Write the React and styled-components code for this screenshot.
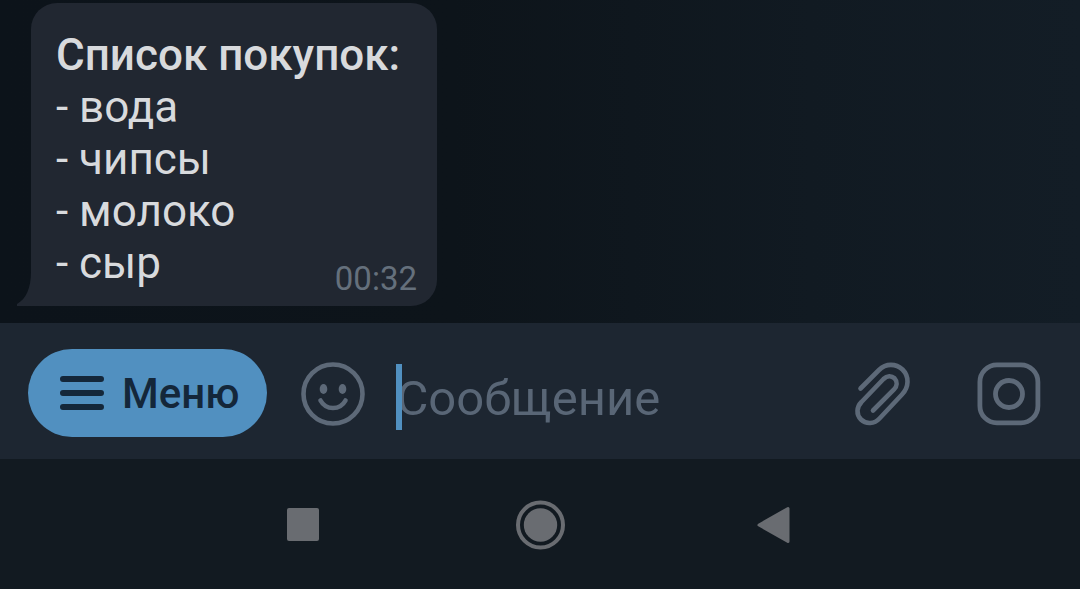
import React from "react";
import styled, { createGlobalStyle } from "styled-components";

const GlobalStyle = createGlobalStyle`
  * {
    box-sizing: border-box;
  }
  body {
    margin: 0;
    background: #121a21;
    font-family: Roboto, "Noto Sans", sans-serif;
  }
`;

const Screen = styled.div`
  display: flex;
  flex-direction: column;
  min-height: 100vh;
`;

const Chat = styled.main`
  display: flex;
  flex: 1;
  align-items: flex-end;
  padding: 3px 16px 17px 31px;
  background: linear-gradient(90deg, #0c131a 0%, #0d141a 42%, #111a22 75%, #131d26 100%);
`;

const Bubble = styled.article`
  position: relative;
  display: flex;
  align-items: flex-end;
  min-width: 406px;
  padding: 26px 20px 7px 25px;
  border-radius: 26px 26px 26px 0;
  background: #212731;
`;

const Tail = styled.svg`
  position: absolute;
  left: -15px;
  bottom: 0;
  width: 16px;
  height: 34px;
  fill: #212731;
`;

const MessageText = styled.div`
  flex: 1;
  padding-bottom: 10px;
  color: #d8dadd;
  font-size: 44px;
  line-height: 52px;
  white-space: nowrap;
`;

const Title = styled.h1`
  margin: 0;
  font-size: 44px;
  font-weight: 500;
  line-height: 52px;
`;

const List = styled.ul`
  margin: 0;
  padding: 0;
  list-style: none;
`;

const Time = styled.time`
  width: 84px;
  margin-left: -84px;
  color: #65707c;
  font-size: 33px;
  line-height: 40px;
  text-align: right;
`;

const Composer = styled.form`
  display: flex;
  align-items: center;
  height: 136px;
  padding: 0 37px 0 28px;
  background: #1d2631;
`;

const MenuButton = styled.button`
  display: flex;
  align-items: center;
  gap: 17px;
  height: 88px;
  margin: 4px 32px 0 0;
  padding: 0 28px 0 31px;
  border: 0;
  border-radius: 44px;
  background: #5190c0;
  color: #14273a;
  font-family: inherit;
  font-size: 42px;
  font-weight: 500;
`;

const IconButton = styled.button`
  display: flex;
  flex: none;
  padding: 0;
  border: 0;
  background: none;
  color: ${({ $color }) => $color || "#5d6978"};
`;

const ComposerButton = styled(IconButton)`
  margin-top: 6px;
`;

const Field = styled.label`
  position: relative;
  flex: 1;
  min-width: 0;
  margin: 14px 24px 0 29px;
`;

const Caret = styled.span`
  position: absolute;
  top: -2px;
  left: 0;
  width: 6px;
  height: 66px;
  background: #5190c0;
`;

const Input = styled.input`
  display: block;
  width: 100%;
  height: 64px;
  padding: 0;
  border: 0;
  outline: 0;
  background: none;
  color: #d8dadd;
  font-family: inherit;
  font-size: 49px;

  &::placeholder {
    color: #596676;
    opacity: 1;
  }
`;

const Actions = styled.div`
  display: flex;
  gap: 63px;
`;

const NavBar = styled.nav`
  display: flex;
  justify-content: center;
  align-items: center;
  gap: 172px;
  height: 130px;
  background: #121a21;
`;

const items = ["вода", "чипсы", "молоко", "сыр"];

function MenuIcon() {
  return (
    <svg width="46" height="36" viewBox="0 0 46 36" stroke="currentColor" strokeWidth="6" strokeLinecap="round">
      <path d="M4 4h38M4 18h38M4 32h38" />
    </svg>
  );
}

function SmileIcon() {
  return (
    <svg width="68" height="68" viewBox="0 0 68 68" fill="none" stroke="currentColor" strokeWidth="4.6">
      <circle cx="34" cy="34" r="29.5" />
      <ellipse cx="24.5" cy="29" rx="3.8" ry="5" fill="currentColor" stroke="none" />
      <ellipse cx="43.5" cy="29" rx="3.8" ry="5" fill="currentColor" stroke="none" />
      <path d="M21.500 40.500c5.500 10 19.500 10 25 0" strokeLinecap="round" />
    </svg>
  );
}

function ClipIcon() {
  return (
    <svg width="60" height="68" viewBox="0 0 60 68" fill="none" stroke="currentColor" strokeWidth="4.6" strokeLinecap="round">
      <path d="M8.500 28.500L27 10C34 3 44 3.500 50.500 9.500C57.500 16.500 57 27 50 34.500L27.500 58.500C22.500 64 14 64.500 9 59.500C4 54.500 4.500 47 9.500 42L31.500 19C35 15.500 39.500 15.500 42.500 18.300C45.500 21.500 45.300 26 42 29.500L21 50.500" />
    </svg>
  );
}

function CameraIcon() {
  return (
    <svg width="68" height="68" viewBox="0 0 68 68" fill="none" stroke="currentColor" strokeWidth="4.8">
      <rect x="4.900" y="4.900" width="58" height="58" rx="17" />
      <circle cx="34" cy="34" r="13.500" />
    </svg>
  );
}

export default function App() {
  return (
    <Screen>
      <GlobalStyle />
      <Chat>
        <Bubble>
          <Tail viewBox="0 0 16 34">
            <path d="M15 0C15 16 10 27 1 32V34H16V0Z" />
          </Tail>
          <MessageText>
            <Title>Список покупок:</Title>
            <List>
              {items.map((item) => (
                <li key={item}>- {item}</li>
              ))}
            </List>
          </MessageText>
          <Time>00:32</Time>
        </Bubble>
      </Chat>
      <Composer onSubmit={(e) => e.preventDefault()}>
        <MenuButton type="button">
          <MenuIcon />
          Меню
        </MenuButton>
        <ComposerButton type="button" aria-label="Эмодзи">
          <SmileIcon />
        </ComposerButton>
        <Field>
          <Input type="text" placeholder="Сообщение" aria-label="Сообщение" />
          <Caret />
        </Field>
        <Actions>
          <ComposerButton type="button" aria-label="Прикрепить">
            <ClipIcon />
          </ComposerButton>
          <ComposerButton type="button" aria-label="Камера">
            <CameraIcon />
          </ComposerButton>
        </Actions>
      </Composer>
      <NavBar>
        <IconButton type="button" aria-label="Недавние" $color="#696c71">
          <svg width="64" height="64" viewBox="0 0 64 64" fill="currentColor">
            <rect x="15" y="16" width="32" height="33" rx="2" />
          </svg>
        </IconButton>
        <IconButton type="button" aria-label="Домой" $color="#696c71">
          <svg width="64" height="64" viewBox="0 0 64 64" fill="currentColor">
            <circle cx="32.500" cy="33" r="16.700" />
            <circle cx="32.500" cy="33" r="22.500" fill="none" stroke="currentColor" strokeWidth="4" />
          </svg>
        </IconButton>
        <IconButton type="button" aria-label="Назад" $color="#696c71">
          <svg width="64" height="64" viewBox="0 0 64 64" fill="currentColor" stroke="currentColor" strokeWidth="3" strokeLinejoin="round">
            <path d="M15 33L44 16.500V49.500Z" />
          </svg>
        </IconButton>
      </NavBar>
    </Screen>
  );
}
